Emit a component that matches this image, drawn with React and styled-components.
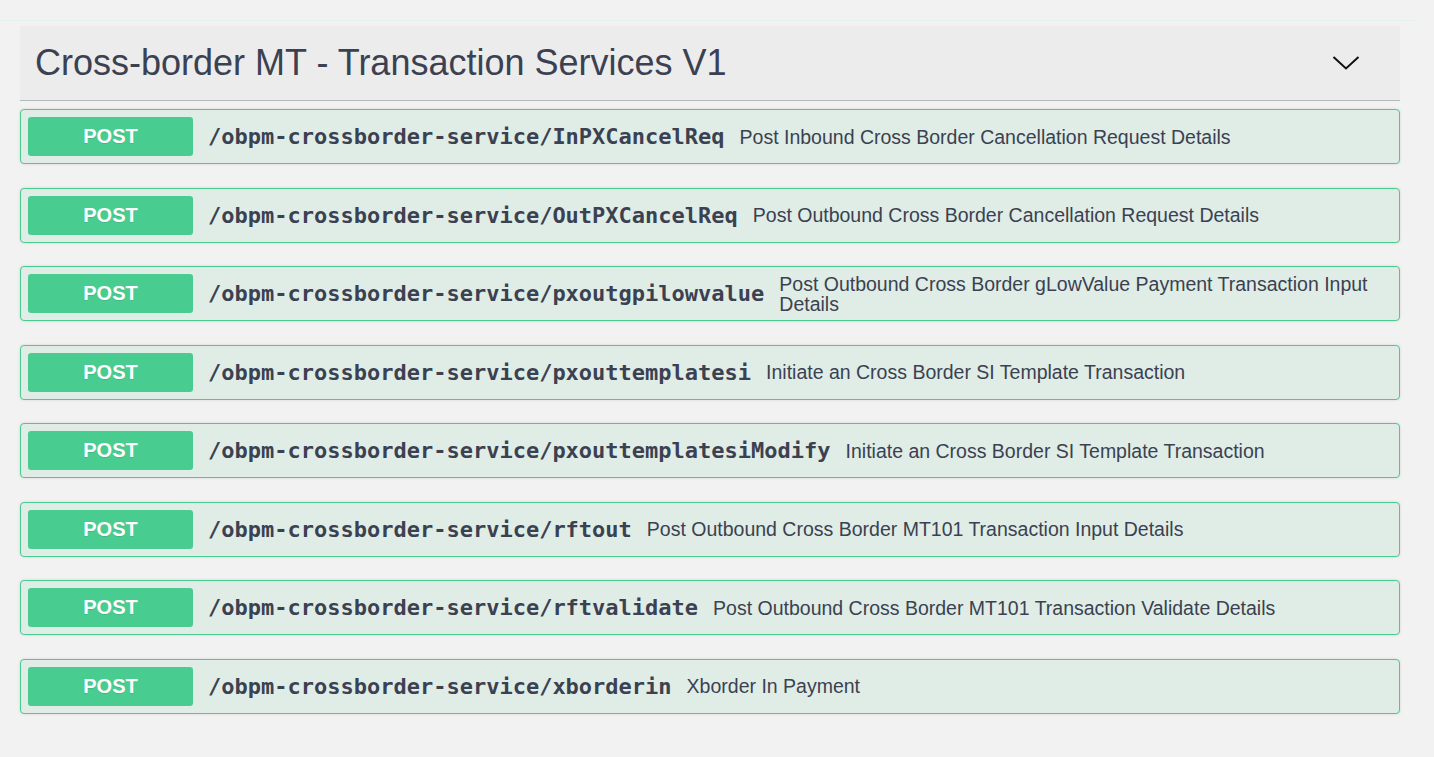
import React from 'react';
import styled, { createGlobalStyle } from 'styled-components';

const Global = createGlobalStyle`
body {
  margin: 0;
  background: #f2f2f2;
  font-family: "Liberation Sans", Arial, sans-serif;
}
`

const Page = styled.div`
  padding-top: 20px;
  height: 737px;
`
const TopLine = styled.div`
  width: 1416px;
  border-top: 1px solid #e4f3e9;
`
const Section = styled.div`
  margin: 5px 34px 0 20px;
`
const Header = styled.div`
  display: flex;
  align-items: center;
  justify-content: space-between;
  height: 75px;
  padding: 0 40px 1px 15px;
  background: #ececec;
  border-bottom: 1px solid #b4b8bd;
  box-sizing: border-box;
`
const Title = styled.h2`
  margin: 0;
  font-size: 36px;
  font-weight: 400;
  color: #3b4151;
  font-family: "Liberation Sans", Arial, sans-serif;
`
const Ops = styled.div`
  padding-top: 8px;
  display: flex;
  flex-direction: column;
  gap: 23.5px;
`
const Op = styled.div`
  display: flex;
  align-items: center;
  min-height: 55px;
  box-sizing: border-box;
  padding: 7px;
  background: #dfede6;
  border: 1px solid #49cc90;
  border-radius: 4px;
  box-shadow: 0 0 3px rgba(0, 0, 0, 0.12);
`
const Method = styled.span`
  flex: 0 0 165px;
  height: 39px;
  display: flex;
  align-items: center;
  justify-content: center;
  background: #49cc90;
  border-radius: 3px;
  color: #fff;
  font-size: 20px;
  font-weight: 700;
  text-shadow: 0 1px 0 rgba(0, 0, 0, 0.1);
`
const Path = styled.span`
  padding: 0 15px;
  font-family: "DejaVu Sans Mono", monospace;
  font-weight: 700;
  font-size: 22px;
  color: #3b4151;
  white-space: nowrap;
`
const Desc = styled.span`
  flex: 1;
  margin: -1px 0;
  padding-right: 10px;
  font-size: 19.5px;
  line-height: 20px;
  color: #3b4151;
`

const ops = [
  ['InPXCancelReq', 'Post Inbound Cross Border Cancellation Request Details'],
  ['OutPXCancelReq', 'Post Outbound Cross Border Cancellation Request Details'],
  ['pxoutgpilowvalue', 'Post Outbound Cross Border gLowValue Payment Transaction Input Details'],
  ['pxouttemplatesi', 'Initiate an Cross Border SI Template Transaction'],
  ['pxouttemplatesiModify', 'Initiate an Cross Border SI Template Transaction'],
  ['rftout', 'Post Outbound Cross Border MT101 Transaction Input Details'],
  ['rftvalidate', 'Post Outbound Cross Border MT101 Transaction Validate Details'],
  ['xborderin', 'Xborder In Payment'],
]

function App() {
  return (
    <Page>
      <Global />
      <TopLine />
      <Section>
        <Header>
          <Title>Cross-border MT - Transaction Services V1</Title>
          <svg width="28" height="16" viewBox="0 0 28 16">
            <path d="M1.5 2 L14 13.5 L26.5 2" fill="none" stroke="#111" strokeWidth="2" />
          </svg>
        </Header>
        <Ops>
          {ops.map(([p, d]) => (
            <Op key={p}>
              <Method>POST</Method>
              <Path>/obpm-crossborder-service/{p}</Path>
              <Desc>{d}</Desc>
            </Op>
          ))}
        </Ops>
      </Section>
    </Page>
  )
}

export default App
